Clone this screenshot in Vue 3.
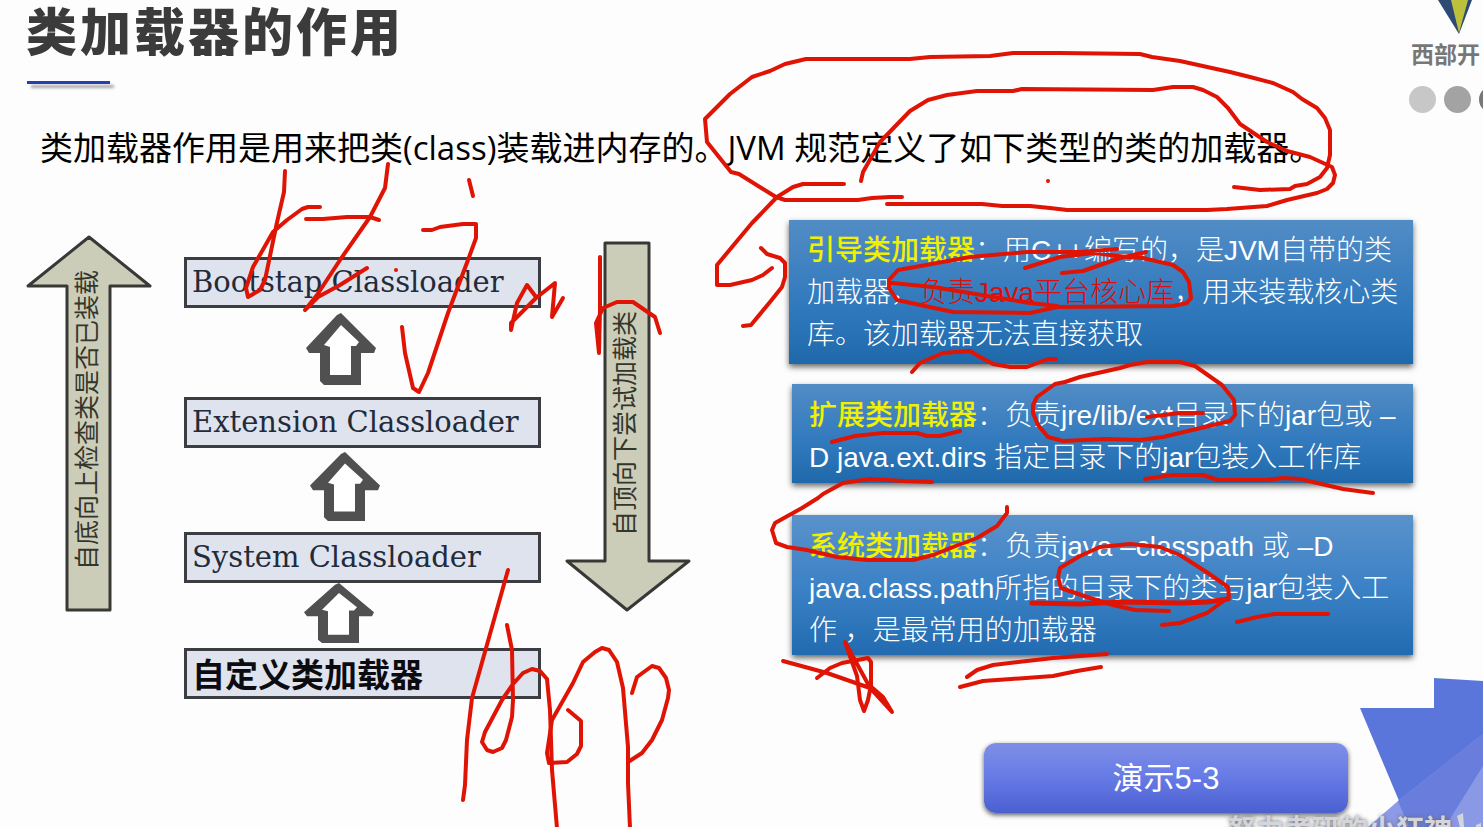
<script setup>
const loaders = [
  { name: 'Bootstap Classloader', arrow: 'tall' },
  { name: 'Extension Classloader', arrow: 'medium' },
  { name: 'System Classloader', arrow: 'short' },
  { name: '自定义类加载器', custom: true }
]

const strokes = [
  // rings around the definition sentence
  '902,197 890,197 872,198 858,200 785,200 776,197 739,174 731,172 707,142 705,119 730,94 752,77 770,71 785,64 806,59 910,59 930,57 990,56 1013,53 1060,53 1140,54 1152,57 1180,61 1230,72 1250,77 1273,83 1293,92 1302,99 1317,108 1325,118 1330,130 1330,155 1327,168 1320,177 1307,184 1295,186 1290,189 1260,190 1234,187',
  '861,181 863,172 880,142 910,111 928,100 947,95 977,91 1013,91 1022,89 1153,90 1173,87 1193,87 1203,90 1217,97 1228,108 1240,124 1267,142 1287,151 1310,157 1332,167 1335,175 1333,183 1327,189 1317,193 1287,200 1267,206 1227,209 1207,210 1067,210 1050,208 1030,206 1002,206 982,204 887,204',
  '844,184 803,184 793,187 777,197 752,223 717,265 717,285 730,285 752,280 763,275 772,268',
  '761,248 767,254 780,258 785,263 785,277 782,287 770,302 751,325 743,326',
  // first card
  '1117,249 1080,252 1027,252 970,257 915,267 898,270 889,280 889,288 897,300 953,312 1030,313 1057,307 1173,306 1187,303 1191,298 1189,282 1183,272 1173,265 1143,258 1127,257 1093,253 1060,257 1025,268',
  '892,283 933,287 1030,303 1057,306',
  '1146,252 1120,258 1083,271 1062,273',
  '912,372 920,363 943,353 970,351 980,357 993,364 1010,367 1027,367 1048,359 1056,359',
  // second card
  '1065,382 1055,384 1037,397 1033,405 1033,413 1038,425 1048,437 1063,441 1105,439 1140,440 1163,437 1230,421 1235,415 1234,400 1222,385 1195,366 1180,362 1147,362 1130,365 1120,368 1080,377 1065,382',
  '1147,417 1180,413 1203,413',
  '832,442 855,436 883,433 917,433 927,436 940,436 960,431',
  '1145,479 1172,475 1203,475 1218,480 1267,480 1283,478 1300,479 1343,489 1373,493',
  // third card
  '932,482 903,481 870,479 843,483 823,494 818,498 802,508 775,523 772,530 776,543 787,547 807,550 837,557 867,560 913,560 933,555 953,547 977,538 987,532 997,526 1007,513 1007,507',
  '1169,611 1135,610 1113,605 1090,598 1061,588 1058,577 1060,568 1080,556 1100,547 1130,544 1160,547 1180,555 1208,573 1228,587 1229,597 1207,613 1180,623 1162,625',
  '1237,622 1257,617 1275,614 1328,614',
  '967,677 977,670 993,665 1053,658 1107,654',
  '960,687 983,681 1053,676 1077,671 1101,667',
  '783,661 827,673 870,688 892,712 883,697 868,684 845,642 857,676 860,700 864,711 868,700 871,685 871,662 868,658 842,663 830,668 817,678',
  // App
  '508,570 472,698 467,740 465,785 463,800',
  '507,625 512,650 513,700 512,717 506,740 502,748 493,752 487,750 482,742 485,732 502,700 513,684 523,673 532,669 540,671 547,679 550,710 552,770 557,828',
  '568,710 581,721 581,746 577,754 567,762 549,763 547,753 552,720 573,683 583,662 595,652 602,648 609,650 617,662 623,688 628,747 628,783 630,828',
  '632,693 637,677 652,666 659,668 666,678 669,690 668,698 662,720 652,740 642,753 628,762',
  // rt.jar scribble
  '285,171 284,192 278,218 276,227 265,280 260,290 248,297 246,288 253,267 273,232 287,220 302,209 308,207 320,207',
  '388,164 385,188 370,217 340,260 317,295 305,310 318,297 340,285 367,268',
  '306,219 323,219 347,217 370,217 379,220',
  '469,180 473,196',
  '423,230 432,230 440,227 463,224 476,224 476,238 468,260 448,313 428,373 419,392 413,388 405,353 402,327',
  '563,298 552,317 555,283 536,298 511,323 511,330 517,303 527,285 536,297',
  '600,257 600,310 599,353 596,323 603,308 617,302 633,302 655,317 660,333'
]
</script>

<template>
  <main class="slide">
    <header class="head">
      <div>
        <h1>类加载器的作用</h1>
        <div class="rule"></div>
      </div>
      <div class="brand">
        <svg class="mark" width="40" height="34" viewBox="0 0 40 34" aria-hidden="true">
          <polygon points="5,0 39,0 26,34" fill="#2c4a73" />
          <polygon points="18,0 35,0 26,33" fill="#bcc13c" />
        </svg>
        <div class="brand-name">西部开</div>
        <div class="dots"><i class="d1"></i><i class="d2"></i><i class="d3"></i></div>
      </div>
    </header>

    <p class="intro">类加载器作用是用来把类(class)装载进内存的。JVM 规范定义了如下类型的类的加载器。</p>

    <section class="content">
      <svg class="side up" width="126" height="378" viewBox="0 0 126 378">
        <polygon points="63,2 124,51 84,51 84,375 41,375 41,51 2,51" />
        <text transform="translate(70 335) rotate(-90)">自底向上检查类是否已装载</text>
      </svg>

      <div class="stack">
        <template v-for="item in loaders" :key="item.name">
          <div class="box" :class="{ custom: item.custom }">{{ item.name }}</div>
          <svg v-if="item.arrow" class="step" :class="item.arrow" viewBox="0 0 70 72" preserveAspectRatio="none" aria-hidden="true">
            <path d="M35 0 L70 35 L68 40 H55 V72 H18 L14 68 V40 H3 L0 35 L31 2Z" fill="#505050" />
            <path d="M35 12 L53 29 L50 33 H45 V62 H24 V34 L18 32Z" fill="#fff" />
          </svg>
        </template>
      </div>

      <svg class="side down" width="126" height="372" viewBox="0 0 126 372">
        <polygon points="40,2 84,2 84,320 124,320 62,369 2,320 40,320" />
        <text transform="translate(69 295) rotate(-90)">自顶向下尝试加载类</text>
      </svg>

      <div class="cards">
        <p class="card first"><b>引导类加载器</b>：用C++编写的，是JVM自带的类<br>加载器，<em>负责Java平台核心库</em>，用来装载核心类<br>库。该加载器无法直接获取</p>
        <p class="card second"><b>扩展类加载器</b>：负责jre/lib/ext目录下的jar包或 –<br>D java.ext.dirs 指定目录下的jar包装入工作库</p>
        <p class="card third"><b>系统类加载器</b>：负责java –classpath 或 –D<br>java.class.path所指的目录下的类与jar包装入工<br>作 ，是最常用的加载器</p>
        <button class="demo" type="button">演示5-3</button>
      </div>
    </section>

    <svg class="corner" width="123" height="149" viewBox="0 0 123 149" aria-hidden="true">
      <polygon points="0,30 74,30 74,0 123,3 123,149 50,149" fill="#5b76da" />
      <polygon points="123,56 38,123 8,149 123,149" fill="#8c9ae8" />
      <polygon points="123,56 38,123 49,149 123,149" fill="#697edc" />
      <polygon points="123,88 85,149 123,149" fill="#8a99e6" />
    </svg>
    <div class="watermark">努力考研的小狂神</div>
    <svg class="watermark-mark" width="28" height="14" viewBox="0 0 28 14" aria-hidden="true">
      <path d="M2 3 L8 0 L9 14 H5Z M21 12 L26 10 V14 H21Z" fill="#d3d5dc" />
    </svg>

    <svg class="ink" width="1483" height="827" viewBox="0 0 1483 827" aria-hidden="true">
      <polyline v-for="(p, i) in strokes" :key="i" :points="p" />
      <polyline class="thick" points="1032,603 1080,604 1120,602 1182,603 1207,602 1228,599" />
      <circle cx="1048" cy="181" r="2" />
      <circle cx="396" cy="270" r="2" />
    </svg>
  </main>
</template>

<style>
body {
  margin: 0;
}
</style>

<style scoped>
.slide {
  position: relative;
  box-sizing: border-box;
  min-height: 100vh;
  overflow: hidden;
  background: #fdfdfd;
  color: #000;
  font-family: "Liberation Sans", "Noto Sans CJK SC", sans-serif;
}
h1,
p {
  margin: 0;
}
.head {
  display: flex;
  justify-content: space-between;
  padding-left: 26px;
  height: 124px;
}
h1 {
  font-size: 51px;
  line-height: 68px;
  letter-spacing: 3px;
  font-weight: 900;
  color: #3b3b3b;
}
.rule {
  width: 83px;
  height: 3px;
  margin: 13px 0 0 1px;
  background: #2440b0;
  box-shadow: 4px 4px 3px rgba(0, 0, 0, 0.35);
}
.brand {
  width: 74px;
  overflow: hidden;
}
.mark {
  display: block;
  margin-left: 24px;
}
.brand-name {
  margin: 8px 0 0 2px;
  font-size: 23px;
  line-height: 26px;
  font-weight: 700;
  color: #777;
  white-space: nowrap;
}
.dots {
  display: flex;
  gap: 8px;
  margin-top: 18px;
}
.dots i {
  flex: none;
  width: 27px;
  height: 27px;
  border-radius: 50%;
}
.d1 {
  background: #c7c7c7;
}
.d2 {
  background: #a3a3a3;
}
.d3 {
  background: #777;
}
.intro {
  padding-left: 40px;
  font-family: "Open Sans", "Noto Sans CJK SC", sans-serif;
  font-size: 33px;
  line-height: 48px;
  white-space: nowrap;
}
.content {
  display: grid;
  grid-template-columns: 126px 389px 151px 1fr;
  align-items: start;
  padding: 48px 70px 0 26px;
}
.side polygon {
  fill: #cccdb9;
  stroke: #383936;
  stroke-width: 3px;
  stroke-linejoin: round;
}
.side text {
  fill: #34362c;
  font-family: "Noto Sans CJK SC", sans-serif;
  font-size: 25px;
}
.up {
  margin-top: 15px;
}
.down {
  margin: 21px 0 0 24px;
}
.stack {
  display: flex;
  flex-direction: column;
  margin: 37px 0 0 32px;
}
.box {
  box-sizing: border-box;
  height: 51px;
  border: 3px solid #3c3d42;
  background: #dfe3ee;
  padding-left: 5px;
  font-family: "DejaVu Serif", serif;
  font-size: 29px;
  line-height: 45px;
  color: #222b3a;
  white-space: nowrap;
}
.box.custom {
  font-family: "Noto Sans CJK SC", sans-serif;
  font-size: 33px;
  font-weight: 700;
  color: #0c0c10;
}
.step {
  width: 70px;
  margin-left: 122px;
}
.tall {
  height: 72px;
  margin-top: 5px;
  margin-bottom: 12px;
}
.medium {
  height: 69px;
  margin-left: 126px;
  margin-top: 4px;
  margin-bottom: 11px;
}
.short {
  height: 60px;
  margin-left: 120px;
  margin-bottom: 5px;
}
.cards {
  display: flex;
  flex-direction: column;
  margin-left: 97px;
}
.card {
  box-sizing: border-box;
  margin-left: 3px;
  padding: 11px 0 4px 17px;
  background: linear-gradient(#528cc5, #3079bd 60%, #1f69ab);
  box-shadow: 0 3px 6px rgba(0, 0, 0, 0.6);
  color: #fff;
  font-size: 28px;
  line-height: 42px;
  font-weight: 300;
  white-space: nowrap;
}
.card b {
  color: #f0f000;
  font-weight: 500;
}
.card em {
  color: #d90e0e;
  font-style: normal;
}
.first {
  margin-left: 0;
  padding: 10px 0 8px 18px;
}
.second {
  margin-top: 20px;
}
.third {
  margin-top: 32px;
  padding-bottom: 3px;
  background: linear-gradient(#5a92cb, #3c82c6 50%, #226bb0);
}
.demo {
  width: 364px;
  height: 70px;
  margin: 88px 0 0 195px;
  padding: 0 0 6px;
  border: 0;
  border-radius: 12px;
  background: linear-gradient(#7f8fe6, #667ae6 50%, #4b60d0);
  box-shadow: 0 2px 5px rgba(0, 0, 0, 0.65);
  color: #fff;
  font-family: inherit;
  font-size: 31px;
}
.corner {
  position: absolute;
  right: 0;
  bottom: 0;
}
.watermark {
  position: absolute;
  right: 31px;
  bottom: -22px;
  font-size: 28px;
  line-height: 36px;
  font-weight: 700;
  color: #d3d5dc;
  text-shadow: 0 0 4px #666;
  white-space: nowrap;
}
.watermark-mark {
  position: absolute;
  right: 0;
  bottom: 0;
}
.ink {
  position: absolute;
  top: 0;
  left: 0;
  pointer-events: none;
}
.ink polyline {
  fill: none;
  stroke: #e01404;
  stroke-width: 4px;
  stroke-linejoin: round;
  stroke-linecap: round;
}
.ink .thick {
  stroke-width: 5px;
}
.ink circle {
  fill: #e01404;
}
</style>
